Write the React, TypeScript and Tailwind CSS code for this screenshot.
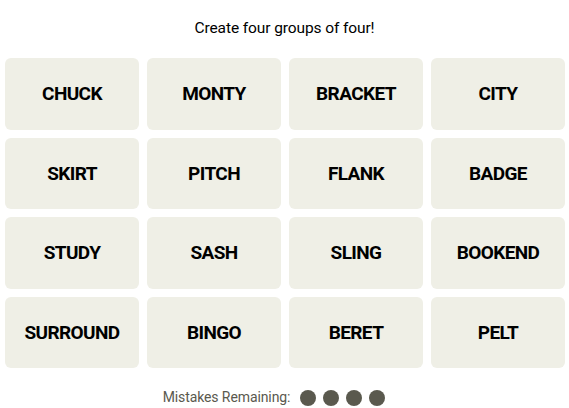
const words = [
  'CHUCK', 'MONTY', 'BRACKET', 'CITY',
  'SKIRT', 'PITCH', 'FLANK', 'BADGE',
  'STUDY', 'SASH', 'SLING', 'BOOKEND',
  'SURROUND', 'BINGO', 'BERET', 'PELT',
]

export default function App() {
  return (
    <div className="w-[569px] h-[408px] bg-white font-['Roboto',sans-serif] text-black">
      <p className="pt-[18px] text-center text-[15.5px] leading-[20px] tracking-[-0.1px]">Create four groups of four!</p>
      <div className="mt-[20px] pl-[5px] pr-[4px] grid grid-cols-4 gap-x-2 gap-y-2">
        {words.map((w) => (
          <div
            key={w}
            className="h-[71.5px] rounded-[6px] bg-[#efefe6] flex items-center justify-center pt-[1px] text-[19px] font-bold tracking-[-0.6px]"
          >
            {w}
          </div>
        ))}
      </div>
      <div className="mt-[19px] pr-[21px] flex items-center justify-center gap-[10px]">
        <span className="text-[14px] tracking-[-0.1px] text-[#5a594e]">Mistakes Remaining:</span>
        <div className="flex gap-[7px]">
          <span className="w-4 h-4 rounded-full bg-[#5a594e]" />
          <span className="w-4 h-4 rounded-full bg-[#5a594e]" />
          <span className="w-4 h-4 rounded-full bg-[#5a594e]" />
          <span className="w-4 h-4 rounded-full bg-[#5a594e]" />
        </div>
      </div>
    </div>
  )
}
